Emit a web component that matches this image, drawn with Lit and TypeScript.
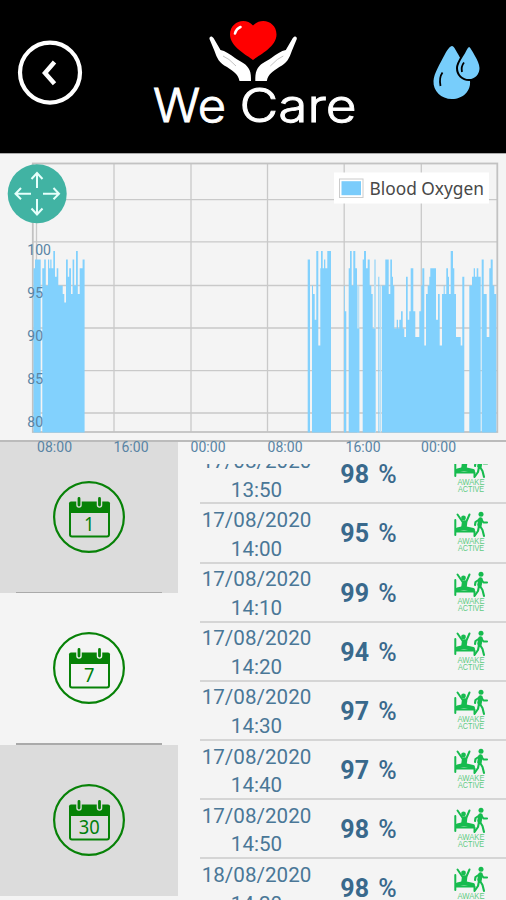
import { LitElement, html, svg, css } from "lit";
import { customElement } from "lit/decorators.js";

// Each run of bars: [start, end, SpO2 value], horizontal units are chart pixels.
const left: number[][] = [
  [33.5, 35, 97], [35, 40.7, 98], [42.3, 44.2, 97], [44.2, 45.8, 98], [45.8, 48, 95], [48, 49.2, 98],
  [49.2, 50.3, 97], [50.3, 51.5, 98], [51.5, 53.3, 97], [53.3, 55, 99], [55, 56.7, 96], [56.7, 58.3, 97],
  [58.3, 62.7, 95], [62.7, 64.3, 94], [64.3, 66, 93], [66, 67.8, 98], [67.8, 69.2, 96], [69.2, 71, 97],
  [71, 72.6, 94], [72.6, 74.2, 98], [74.2, 76, 95], [76, 77.8, 99], [77.8, 79.7, 94], [79.7, 82.6, 97], [82.6, 84.6, 98],
];
const right: number[][] = [
  [53, 60, 98], [66, 69, 95], [69, 74, 94], [74, 79, 91], [79, 85, 99], [85, 91, 88], [91, 93, 97],
  [93, 98, 99], [98, 102, 97], [102, 106, 98], [106, 112, 97], [112, 123, 99], [162, 164, 95],
  [164, 169, 92], [176, 180, 97], [180, 185, 99], [185, 190, 95], [190, 196, 99], [196, 201, 97],
  [201, 208, 90], [218, 222, 98], [222, 228, 99], [228, 233, 97], [233, 239, 98],
  [239, 244, 95], [244, 248, 94], [248, 256, 90], [265, 268, 96],
  [276, 286, 95], [286, 296, 98], [296, 301, 94], [301, 306, 98], [306, 309, 96], [309, 313, 95],
  [313, 320, 90], [320, 324, 91], [324, 328, 90], [328, 333, 91], [333, 338, 92], [338, 343, 90],
  [343, 348, 89], [348, 353, 96], [353, 358, 91], [358, 362, 92], [362, 370, 97], [370, 376, 92],
  [376, 388, 89], [388, 394, 92], [394, 397, 95], [397, 403, 97], [403, 408, 88], [408, 413, 94], [413, 418, 95],
  [418, 421, 96], [421, 438, 97], [438, 444, 91], [444, 449, 94], [449, 456, 88], [456, 461, 94],
  [461, 464, 95], [464, 469, 94], [469, 474, 97], [474, 477, 96], [477, 482, 94], [482, 489, 99], [489, 493, 97],
  [493, 498, 94], [498, 512, 89], [512, 517, 88], [517, 523, 96], [538, 546, 95], [546, 551, 96],
  [551, 555, 97], [555, 560, 96], [560, 565, 97], [565, 572, 96], [575, 581, 98], [581, 590, 94],
  [590, 598, 89], [598, 602, 97], [602, 608, 98], [608, 613, 95], [613, 619, 94],
].map(([a, b, v]) => [290 + a / 3, 290 + b / 3, v]);
const pale: number[][] = [
  [357, 359.3, 95], [374, 376, 98], [379.7, 381.3, 95],
];

const chartY = (v: number) => 97 + (99 - v) * 8.6;
const barPath = (runs: number[][]) =>
  runs.map(([a, b, v]) => `M${a.toFixed(1)} 278.5V${chartY(v).toFixed(1)}H${b.toFixed(1)}V278.5Z`).join("");

const readings = [
  ["17/08/2020", "13:50", 98], ["17/08/2020", "14:00", 95], ["17/08/2020", "14:10", 99],
  ["17/08/2020", "14:20", 94], ["17/08/2020", "14:30", 97], ["17/08/2020", "14:40", 97],
  ["17/08/2020", "14:50", 98], ["18/08/2020", "14:20", 98],
];

@customElement("wc-header")
class WcHeader extends LitElement {
  static styles = css`
    :host { display: flex; align-items: flex-start; justify-content: space-between; height: 153px; box-sizing: border-box; background: #000; padding: 0 24px 0 17px; }
    .back { margin-top: 40px; }
    .logo { margin-right: 8px; }
    .drops { margin-top: 44px; }
    svg { display: block; }
    .brand { font-family: Inter, "Liberation Sans", sans-serif; font-weight: 300; font-size: 46px; fill: #fff; stroke: #fff; stroke-width: .9px; }
  `;
  render() {
    const hand = svg`
      <path d="M209.500 39C209 36 212 35.500 213.500 38L220.500 50C225 51 230 54 235 58C241 62 247 64 249.500 70C251 73 251 77 251 81H239.500C238 74 234 72 227 67C219 63 217 58 214.500 51Z" fill="#fff" />
      <path d="M223 56L229 59.500L236 66" fill="none" stroke="#bbb" stroke-width=".9" />`;
    return html`
      <svg class="back" width="66" height="66" viewBox="0 0 66 66" fill="none" stroke="#fff">
        <circle cx="33" cy="32.6" r="30" stroke-width="4.2" />
        <path d="M37.500 22L28 33L37.500 43.800" stroke-width="4.500" />
      </svg>
      <svg class="logo" width="210" height="140" viewBox="149 0 210 140">
        <path d="M253 60C247 55 230 47 230 34.500C230 22 245 16.500 253 25.500C262 16.500 276.500 22 276.500 34.500C276.500 47 259 55 253 60Z" fill="#f00" />
        <path d="M235 33.500C236 30 238 28 240.500 27" fill="none" stroke="#fff" stroke-width="2.600" stroke-linecap="round" />
        ${hand}
        <g transform="matrix(-1 0 0 1 506.300 0)">${hand}</g>
        <text class="brand" y="122.300" x="153" textLength="73" lengthAdjust="spacingAndGlyphs">We</text>
        <text class="brand" y="122.300" x="239.500" textLength="117" lengthAdjust="spacingAndGlyphs">Care</text>
      </svg>
      <svg class="drops" width="50" height="58" viewBox="432 44 50 58">
        <path d="M452 46C454 46 455.500 50 458 54C462 62 469 72 470 81C471 91 463 99 452 99C441 99 433 91 433.500 81C434 73 440 64 444.500 55C447 50 450 46 452 46Z" fill="#77cdfb" />
        <path d="M469 46C471 46 472.500 50 475 54C478 59 480.500 63 480.500 68C480.500 75 475.500 80 469 80C462 80 457 75 457 68C457 63 461 58 464 53C466 49 467.500 46 469 46Z" fill="#77cdfb" stroke="#000" stroke-width="2" />
        <path d="M442.500 72.500C440 76 439.500 81 440.500 86M464 62.500C462 65 461.300 69 462 72" fill="none" stroke="#000" stroke-width="1.800" />
      </svg>`;
  }
}

@customElement("oxygen-chart")
class OxygenChart extends LitElement {
  static styles = css`
    :host { display: block; height: 289px; background: #f4f4f4; border-top: 1px solid #aaa; border-bottom: 2px solid #bbb; box-sizing: border-box; position: relative; z-index: 1; }
    svg { display: block; overflow: visible; }
    .tick { font: 14px Roboto, sans-serif; fill: #5984a4; }
    .legend { font: 17.5px "Noto Sans", sans-serif; fill: #484848; }
  `;
  render() {
    return html`<svg width="506" height="286" viewBox="0 0 506 286">
      <g fill="none" stroke="#c9c9c9" stroke-width="1.300">
        ${[45.7, 87.8, 131.5, 174, 216.7, 259].map((y) => svg`<path d=${`M32.5 ${y}H497`} />`)}
        ${[36.5, 114, 191, 267.5, 344.2, 421.3].map((x) => svg`<path d=${`M${x} 9.5V278`} />`)}
      </g>
      <rect x="32.800" y="9.500" width="464.500" height="268.500" fill="none" stroke="#c2c2c2" stroke-width="1.800" />
      <path d=${barPath(pale)} fill="#b9e0f5" />
      <path d=${barPath([...left, ...right])} fill="#82d1fd" />
      ${["100", "95", "90", "85", "80"].map((t, i) => svg`<text class="tick" x="27.300" y=${101.3 + i * 42.8}>${t}</text>`)}
      ${["08:00", "16:00", "00:00", "08:00", "16:00", "00:00"].map((t, i) => svg`<text class="tick" x=${[37, 113.5, 190.5, 267.5, 345.5, 421][i]} y="298.300" textLength="35">${t}</text>`)}
      <rect x="334" y="18.500" width="155" height="31" fill="#fff" />
      <rect x="339.500" y="25" width="23.500" height="18.500" fill="#fff" stroke="#ccc" />
      <rect x="341.500" y="27.200" width="19.500" height="14" fill="#7accfb" />
      <text class="legend" x="369.500" y="40.500" textLength="114.500" lengthAdjust="spacingAndGlyphs">Blood Oxygen</text>
      <circle cx="37.200" cy="39.700" r="29.500" fill="#41b3a3" />
      <path d="M37 34V20M31.500 25L37 19L42.500 25M37 45V60M31.500 54.500L37 60.500L42.500 54.500M31 39.700H15.500M21 34L15.500 39.700L21 45.200M43 39.700H59M53.500 34L59 39.700L53.500 45.200" fill="none" stroke="#e6fffb" stroke-width="2" />
    </svg>`;
  }
}

@customElement("range-picker")
class RangePicker extends LitElement {
  static styles = css`
    :host { display: flex; flex-direction: column; width: 178px; flex: none; }
    .range { height: 151.300px; flex: none; box-sizing: border-box; display: flex; flex-direction: column; align-items: center; justify-content: space-between; }
    .range.shaded { background: #dcdcdc; }
    .rule { width: 146px; height: 1.500px; background: #aaa; }
    svg { display: block; margin-top: 38px; }
    .day { font: 20px "Noto Sans", sans-serif; fill: #00800a; text-anchor: middle; }
  `;
  render() {
    return html`${[1, 7, 30].map((n, i) => html`
      <div class="range ${i % 2 ? "" : "shaded"}">
        <svg width="74" height="74" viewBox="0 0 74 74">
          <circle cx="37" cy="37" r="34.900" fill="none" stroke="#078207" stroke-width="2.200" />
          <rect x="18" y="23" width="39" height="33.500" rx="2" fill="none" stroke="#078207" stroke-width="2" />
          <path d="M17 33V23.500Q17 21.500 19 21.500H56Q58 21.500 58 23.500V33Z" fill="#078207" />
          <g stroke-linecap="round"><path d="M27 18.500V25M47.500 18.500V25" stroke=${i % 2 ? "#f4f4f4" : "#dcdcdc"} stroke-width="5.500" />
          <path d="M27 18.500V25M47.500 18.500V25" stroke="#078207" stroke-width="2.800" /></g>
          <text class="day" x="37.300" y="51.300" textLength=${n > 9 ? 21 : 10.5} lengthAdjust="spacingAndGlyphs">${n}</text>
        </svg>
        ${i < 2 ? html`<div class="rule"></div>` : ""}
      </div>`)}`;
  }
}

@customElement("reading-list")
class ReadingList extends LitElement {
  static styles = css`
    :host { display: block; flex: 1; margin: 22px 0 0 22px; overflow: hidden; }
    .rows { margin-top: -18.700px; }
    .row { display: grid; grid-template-columns: 113px 111px 1fr; height: 59.150px; box-sizing: border-box; border-bottom: 2px solid #d5d5d5; color: #4a7797; font-family: Roboto, sans-serif; }
    .stamp { display: flex; flex-direction: column; align-items: center; padding-top: 1.500px; font-size: 20.600px; line-height: 28.700px; }
    .value { align-self: center; text-align: center; font-size: 25px; font-weight: 700; color: #39698c; white-space: pre; }
    .unit { font-weight: 500; margin-left: 3px; }
    svg { display: block; margin: 7px 0 0 29px; }
    .state { font: 8.500px "Liberation Sans", sans-serif; fill: #5ecb83; }
  `;
  render() {
    return html`<div class="rows">${readings.map(([d, t, v]) => html`
      <div class="row">
        <div class="stamp"><span>${d}</span><span>${t}</span></div>
        <div class="value">${v} <span class="unit">%</span></div>
        <svg width="36" height="44" viewBox="0 0 36 44">
          <g fill="none" stroke="#16bb4e" stroke-linecap="round" stroke-linejoin="round">
            <path d="M2.300 9V24M2.300 20.500H21.500V24" stroke-width="2" />
            <path d="M4.500 18.500L11 17L20 19" stroke-width="4" />
            <path d="M11 16L11.500 12" stroke-width="5.500" />
            <path d="M10 11.500L4.500 3.500M13 11.500L16.500 3.500" stroke-width="2" />
            <path d="M27.500 8.500L26.500 14" stroke-width="4.500" />
            <path d="M27 8L22.500 11L22 14M28 8L30.500 11.500L34 11.500M26 15L25 20L21.500 25M27 15L29.500 19L31 25" stroke-width="2.100" />
          </g>
          <circle cx="10.500" cy="7" r="2.400" fill="#16bb4e" />
          <circle cx="28" cy="3.300" r="2.500" fill="#16bb4e" />
          <text class="state" x="4.500" y="33" textLength="27" lengthAdjust="spacingAndGlyphs">AWAKE</text>
          <text class="state" x="5" y="39.500" textLength="26" lengthAdjust="spacingAndGlyphs">ACTIVE</text>
        </svg>
      </div>`)}</div>`;
  }
}

@customElement("app-root")
class AppRoot extends LitElement {
  static styles = css`
    :host { display: flex; flex-direction: column; height: 900px; overflow: hidden; background: #f4f4f4; }
    .body { display: flex; flex: 1; min-height: 0; }
  `;
  render() {
    return html`
      <wc-header></wc-header>
      <oxygen-chart></oxygen-chart>
      <div class="body"><range-picker></range-picker><reading-list></reading-list></div>`;
  }
}
